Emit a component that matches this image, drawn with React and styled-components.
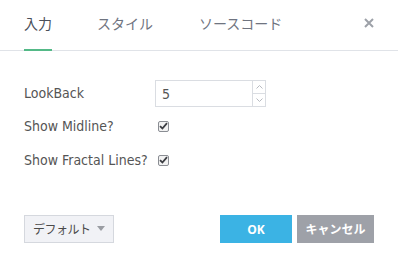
import React, { useState } from 'react';
import styled, { createGlobalStyle } from 'styled-components';

const GlobalStyle = createGlobalStyle`
  html, body {
    margin: 0;
    padding: 0;
    background: #fff;
  }
  body {
    font-family: "DejaVu Sans Condensed", "DejaVu Sans", "Noto Sans CJK JP", sans-serif;
    color: #4a4a4a;
  }
`;

const Dialog = styled.div`
  width: 398px;
  height: 268px;
  display: flex;
  flex-direction: column;
  background: #fff;
`;

const Header = styled.div`
  display: flex;
  align-items: stretch;
  height: 50px;
  border-bottom: 1px solid #e0e3e8;
  padding: 0 0 0 24px;
`;

const Tab = styled.div`
  position: relative;
  display: flex;
  align-items: center;
  margin-right: ${({ gap }) => gap}px;
  font-family: "Noto Sans CJK JP", sans-serif;
  font-size: 14px;
  padding-bottom: 5px;
  color: ${({ active }) => (active ? '#4a4f5a' : '#6f7480')};
  cursor: pointer;

  &::after {
    content: '';
    position: absolute;
    left: 0;
    right: 0;
    bottom: -1px;
    height: 2px;
    background: ${({ active }) => (active ? '#53b987' : 'transparent')};
  }
`;

const Close = styled.div`
  margin-left: auto;
  width: 46px;
  display: flex;
  align-items: center;
  justify-content: center;
  padding-bottom: 5px;
  padding-right: 6px;
`;

const Body = styled.div`
  display: grid;
  grid-template-columns: 131px auto;
  align-items: center;
  padding: 29px 24px 0;
`;

const Label = styled.div`
  font-family: "DejaVu Sans Condensed", "DejaVu Sans", sans-serif;
  font-stretch: condensed;
  font-size: 14px;
  color: #555;
  height: ${({ h }) => h}px;
  display: flex;
  align-items: center;
  padding-bottom: 1px;
  box-sizing: border-box;
`;

const Field = styled.div`
  height: ${({ h }) => h}px;
  display: flex;
  align-items: center;
`;

const NumberBox = styled.div`
  width: 111px;
  height: 27px;
  box-sizing: border-box;
  border: 1px solid #dadde2;
  display: flex;
`;

const NumberValue = styled.div`
  flex: 1;
  display: flex;
  align-items: center;
  padding-left: 6px;
  font-family: "DejaVu Sans Condensed", "DejaVu Sans", sans-serif;
  font-stretch: condensed;
  font-size: 14px;
  color: #555;
`;

const Spinner = styled.div`
  width: 12px;
  border-left: 1px solid #dadde2;
  display: flex;
  flex-direction: column;
`;

const SpinHalf = styled.div`
  flex: 1;
  display: flex;
  align-items: center;
  justify-content: center;
  & + & {
    border-top: 1px solid #dadde2;
  }
`;

const Check = styled.div`
  width: 11px;
  height: 11px;
  box-sizing: border-box;
  border: 1px solid #8a8d93;
  border-radius: 2px;
  background: #f2f2f2;
  display: flex;
  align-items: center;
  justify-content: center;
  margin-left: 3px;
`;

const Footer = styled.div`
  margin-top: auto;
  display: flex;
  align-items: center;
  padding: 0 24px 25px;
`;

const DefaultButton = styled.div`
  width: 90px;
  height: 28px;
  box-sizing: border-box;
  border: 1px solid #d5d8de;
  background: #f1f2f6;
  display: flex;
  align-items: center;
  padding-left: 8px;
  gap: 6px;
  font-family: "Noto Sans CJK JP", sans-serif;
  font-size: 12px;
  letter-spacing: -0.5px;
  color: #4a4a4a;
  margin-top: -1px;
`;

const Caret = styled.span`
  width: 0;
  height: 0;
  border-left: 4px solid transparent;
  border-right: 4px solid transparent;
  border-top: 5px solid #9a9da3;
`;

const Actions = styled.div`
  margin-left: auto;
  display: flex;
  gap: 5px;
`;

const Button = styled.div`
  width: ${({ w }) => w}px;
  height: 28px;
  display: flex;
  align-items: center;
  justify-content: center;
  background: ${({ bg }) => bg};
  color: #fff;
  font-family: "Open Sans", "Noto Sans CJK JP", sans-serif;
  font-weight: bold;
  font-size: 12px;
`;

const Tick = () => (
  <svg width="9" height="8" viewBox="0 0 9 8">
    <path d="M1 4.2 L3.4 6.5 L8 1.2" fill="none" stroke="#3b3d42" strokeWidth="1.8" />
  </svg>
);

const Arrow = ({ up }) => (
  <svg width="7" height="4" viewBox="0 0 7 4">
    <path d={up ? 'M0.5 3.5 L3.5 0.5 L6.5 3.5' : 'M0.5 0.5 L3.5 3.5 L6.5 0.5'} fill="none" stroke="#b7bac0" strokeWidth="1" />
  </svg>
);

const App = () => {
  const [tab, setTab] = useState(0);
  const tabs = [
    { name: '入力', gap: 45 },
    { name: 'スタイル', gap: 46 },
    { name: 'ソースコード', gap: 0 },
  ];

  return (
    <Dialog>
      <GlobalStyle />
      <Header>
        {tabs.map((t, i) => (
          <Tab key={t.name} gap={t.gap} active={tab === i} onClick={() => setTab(i)}>
            {t.name}
          </Tab>
        ))}
        <Close>
          <svg width="10" height="10" viewBox="0 0 10 10">
            <path d="M1 1 L9 9 M9 1 L1 9" stroke="#9da1a8" strokeWidth="2" />
          </svg>
        </Close>
      </Header>

      <Body>
        <Label h={27}>LookBack</Label>
        <Field h={27}>
          <NumberBox>
            <NumberValue>5</NumberValue>
            <Spinner>
              <SpinHalf><Arrow up /></SpinHalf>
              <SpinHalf><Arrow /></SpinHalf>
            </Spinner>
          </NumberBox>
        </Field>

        <Label h={38}>Show Midline?</Label>
        <Field h={38}><Check><Tick /></Check></Field>

        <Label h={30}>Show Fractal Lines?</Label>
        <Field h={30}><Check><Tick /></Check></Field>
      </Body>

      <Footer>
        <DefaultButton>
          デフォルト
          <Caret />
        </DefaultButton>
        <Actions>
          <Button w={72} bg="#3bb3e4">OK</Button>
          <Button w={77} bg="#9ea1a8">キャンセル</Button>
        </Actions>
      </Footer>
    </Dialog>
  );
};

export default App;
